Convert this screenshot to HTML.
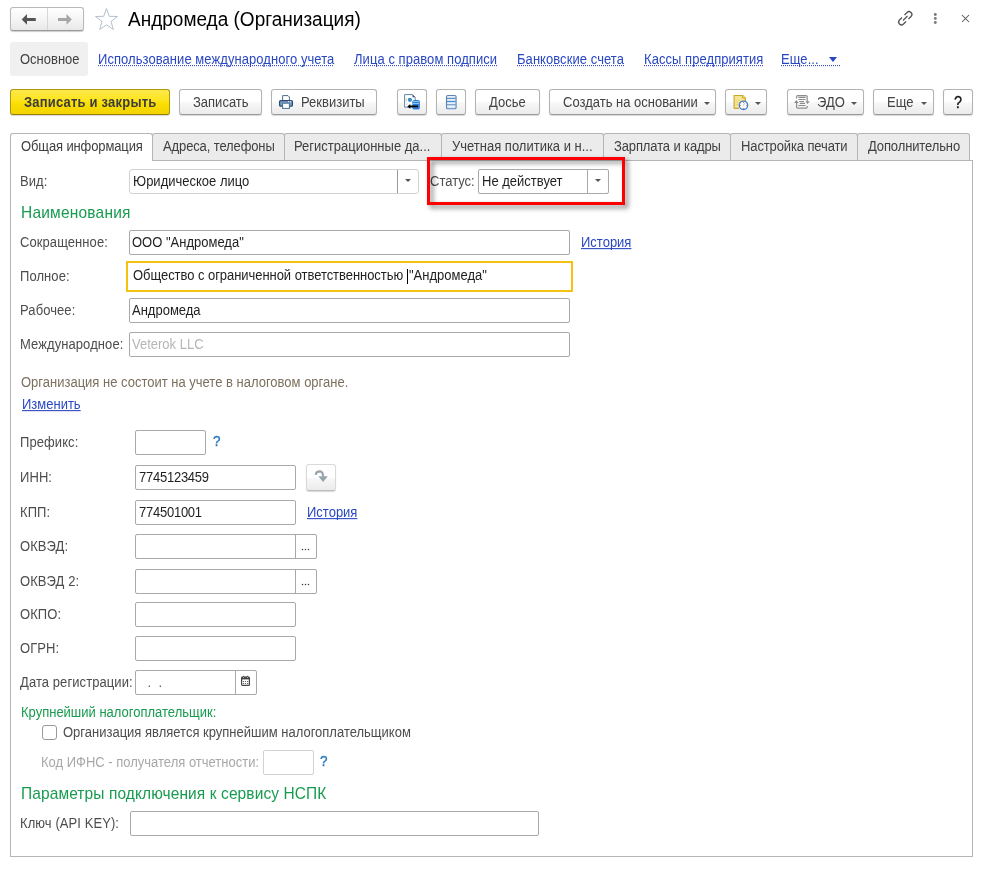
<!DOCTYPE html>
<html><head><meta charset="utf-8">
<style>
*{box-sizing:border-box;margin:0;padding:0}
html,body{width:992px;height:869px;background:#fff;overflow:hidden;position:relative;font-family:"Liberation Sans",sans-serif;font-size:13px;color:#4d4d4d}
.a{position:absolute}
.t{position:absolute;white-space:nowrap;line-height:13px;font-size:13px;transform:scaleY(1.08);transform-origin:0 11px}
.lnk{color:#2947c2;height:13px;letter-spacing:0.06px;background:repeating-linear-gradient(90deg,#2947c2 0 1px,transparent 1px 2px) left bottom/100% 1px no-repeat}
.ul{color:#2947c2;text-decoration:underline;text-decoration-skip-ink:none}
.btn{position:absolute;top:89px;height:26px;border:1px solid #b3b3b3;border-bottom-color:#9a9a9a;border-radius:3px;background:linear-gradient(#fff 0,#fff 50%,#f8f8f8 52%,#ebebeb 100%);box-shadow:0 1px 1px rgba(0,0,0,.16)}
.btn .t{color:#424242}
.fld{position:absolute;height:25px;border:1px solid #a9a9a9;border-radius:2px;background:#fff}
.fld .t{color:#1f1f1f}
.lab{position:absolute;white-space:nowrap;line-height:13px;font-size:13px;color:#4d4d4d;left:20px;letter-spacing:0.08px;transform:scaleY(1.08);transform-origin:0 11px}
.dd{position:absolute;top:0;bottom:0;border-left:1px solid #a9a9a9}
.tri{position:absolute;width:0;height:0;border-left:3px solid transparent;border-right:3px solid transparent;border-top:3px solid #555}
.tab{position:absolute;top:133px;height:27px;border:1px solid #b5b5b5;border-bottom:none;border-radius:3px 3px 0 0;background:#ebebeb}
.tab .t{color:#404040;top:6px;letter-spacing:-0.12px}
.grn{color:#179b4f}
</style></head><body>

<!-- title row -->
<div class="a" style="left:10px;top:7px;width:74px;height:24px;border:1px solid #b9b9b9;border-bottom-color:#9a9a9a;border-radius:3px;background:linear-gradient(#fff,#f3f3f3 60%,#e8e8e8);box-shadow:0 1px 1px rgba(0,0,0,.2)"></div>
<div class="a" style="left:47px;top:8px;width:1px;height:22px;background:#d6d6d6"></div>
<svg class="a" style="left:20px;top:13px" width="20" height="13" viewBox="0 0 20 13"><path d="M1.7 6.4 L7 1.1 L7 4.9 L15.8 4.9 L15.8 8.1 L7 8.1 L7 11.7 Z" fill="#555"/></svg>
<svg class="a" style="left:56px;top:13px" width="20" height="13" viewBox="0 0 20 13"><path d="M15.8 6.4 L10.5 1.1 L10.5 4.9 L2 4.9 L2 8.1 L10.5 8.1 L10.5 11.7 Z" fill="#a6a6a6"/></svg>
<svg class="a" style="left:94px;top:7px" width="25" height="24" viewBox="0 0 25 24"><path d="M12.5 1.5 L15.3 9.3 L23.5 9.5 L17 14.5 L19.3 22.5 L12.5 17.8 L5.7 22.5 L8 14.5 L1.5 9.5 L9.7 9.3 Z" fill="none" stroke="#b4c0cc" stroke-width="1"/></svg>
<div class="t" style="left:128px;top:10px;font-size:19px;line-height:19px;color:#000">Андромеда (Организация)</div>

<svg class="a" style="left:896px;top:9px" width="19" height="19" viewBox="0 0 19 19"><g fill="none" stroke="#555" stroke-width="1.3"><path d="M8.5 6 L11 3.5 Q13 1.6 15 3.5 Q17 5.5 15 7.5 L12.5 10"/><path d="M10 12.5 L7.5 15 Q5.5 17 3.5 15 Q1.6 13 3.5 11 L6 8.5"/><path d="M7 11.5 L11.5 7"/></g></svg>
<svg class="a" style="left:930px;top:10px" width="10" height="16" viewBox="0 0 10 16"><g fill="#7a7a7a"><circle cx="5.3" cy="4.5" r="1.45"/><circle cx="5.3" cy="8.4" r="1.45"/><circle cx="5.3" cy="12.5" r="1.45"/></g></svg>
<svg class="a" style="left:960px;top:13px" width="11" height="11" viewBox="0 0 11 11"><path d="M2 2 L9 9 M9 2 L2 9" stroke="#555" stroke-width="1.05"/></svg>

<!-- links row -->
<div class="a" style="left:10px;top:42px;width:78px;height:34px;border-radius:3px;background:#f0f0f0"></div>
<div class="t" style="left:20px;top:53px;color:#404040">Основное</div>
<div class="t lnk" style="left:98px;top:53px">Использование международного учета</div>
<div class="t lnk" style="left:354px;top:53px">Лица с правом подписи</div>
<div class="t lnk" style="left:517px;top:53px">Банковские счета</div>
<div class="t lnk" style="left:644px;top:53px">Кассы предприятия</div>
<div class="t lnk" style="left:781px;top:53px">Еще...&nbsp;&nbsp;&nbsp;&nbsp;&nbsp;&nbsp;</div>
<div class="tri" style="left:829px;top:57px;border-left-width:4px;border-right-width:4px;border-top:5px solid #2947c2"></div>

<!-- toolbar -->
<div class="btn" style="left:10px;width:160px;border-color:#ae9612;border-bottom-color:#977f00;background:linear-gradient(#ffe94a,#fde31a 45%,#fbdf00 55%,#f2d300)"><div class="t" style="left:13px;top:6px;font-weight:bold;color:#3d3d3d;letter-spacing:0.2px">Записать и закрыть</div></div>
<div class="btn" style="left:179px;width:83px"><div class="t" style="left:13px;top:6px">Записать</div></div>
<div class="btn" style="left:271px;width:106px"><div class="t" style="left:29px;top:6px">Реквизиты</div>
 <svg class="a" style="left:0;top:0" width="30" height="24" viewBox="0 0 30 24"><path d="M10.6 10.5 V5.6 H16 L17.4 7 V10.5" fill="#fff" stroke="#4f6f8c" stroke-width="1"/><rect x="7.6" y="10.6" width="12.8" height="5.6" rx="1.2" fill="#6fa9dc" stroke="#2f4a68" stroke-width="1.3"/><path d="M8.5 11.8 H19.5" stroke="#7f7fa8" stroke-width="0.8"/><circle cx="16.6" cy="11.6" r="0.6" fill="#fff"/><circle cx="18.6" cy="11.6" r="0.6" fill="#fff"/><rect x="10.6" y="13.2" width="6.8" height="5.2" fill="#fff" stroke="#4f6f8c" stroke-width="1"/></svg></div>
<div class="btn" style="left:397px;width:30px">
 <svg class="a" style="left:0;top:0" width="30" height="24" viewBox="0 0 30 24"><path d="M6.6 4.6 H14.5 L17.2 7.3 V17.2 H6.6 Z" fill="#fff" stroke="#6a86a0" stroke-width="1"/><path d="M14.5 4.6 V7.3 H17.2 Z" fill="#3a4f7a"/><circle cx="11.9" cy="9.8" r="2.1" fill="#2f86d6"/><path d="M10.6 9 Q11.5 8.6 12 9.8 Q12.5 11 13.4 10.4" stroke="#5cb85c" stroke-width="0.9" fill="none"/><path d="M8.2 8 V12 M8.2 14 H10" stroke="#bbb" stroke-width="0.7"/><rect x="14.3" y="9.9" width="7.6" height="9.6" rx="1.8" fill="#2f7fd4"/><path d="M15 11.5 H21.2 M15 13.5 H21.2" stroke="#8cc6f0" stroke-width="1"/><path d="M9.3 16.4 L12.3 14 V15.6 H20 V17.2 H12.3 V18.8 Z" fill="#000"/></svg></div>
<div class="btn" style="left:436px;width:30px">
 <svg class="a" style="left:0;top:0" width="30" height="24" viewBox="0 0 30 24"><rect x="9.5" y="5.5" width="9.6" height="13.3" rx="1.3" fill="#d7e8f8" stroke="#5f86b3" stroke-width="1.1"/><path d="M9.8 8.4 H18.8 M9.8 14.7 H18.8" stroke="#6a8fb8" stroke-width="1.1"/><path d="M9.8 11.5 H18.8" stroke="#4a8ed6" stroke-width="1.3"/><path d="M10.5 6.8 H18 M10.5 9.9 H18 M10.5 13.1 H18 M10.5 16.4 H18" stroke="#eef6fd" stroke-width="0.9"/></svg></div>
<div class="btn" style="left:475px;width:65px"><div class="t" style="left:13px;top:6px">Досье</div></div>
<div class="btn" style="left:549px;width:167px"><div class="t" style="left:13px;top:6px">Создать на основании</div><div class="tri" style="left:154px;top:12px"></div></div>
<div class="btn" style="left:725px;width:42px">
 <svg class="a" style="left:0;top:0" width="30" height="24" viewBox="0 0 30 24"><path d="M8.1 6 Q8.1 5.5 8.6 5.5 H16.6 L19.3 8.2 V13 M13 18.3 H8.6 Q8.1 18.3 8.1 17.8 Z" fill="#f6e394" stroke="#c6a92c" stroke-width="1.1"/><path d="M8.1 6 V17.8 H13 V13 H19.3 V8.2 L16.6 5.5 H8.6 Z" fill="#f6e394"/><path d="M8.1 6 Q8.1 5.5 8.6 5.5 H16.6 L19.3 8.2 V11 M13 18.3 H8.6 Q8.1 18.3 8.1 17.8 V6" fill="none" stroke="#c6a92c" stroke-width="1.1"/><path d="M16.4 5.5 V8 H19.3" fill="#f6e394" stroke="#c6a92c" stroke-width="1"/><path d="M9.8 10.4 H11 M12 10.4 H13.6 M9.8 12.4 H10.4 M11.2 12.4 H12.6 M9.8 14.4 H11.6" stroke="#e6cf70" stroke-width="0.9"/><circle cx="17.5" cy="15.3" r="4.2" fill="#fff" stroke="#3d7fd0" stroke-width="1.3"/><g fill="#e07a2e"><circle cx="17.5" cy="12.4" r="0.55"/><circle cx="17.5" cy="18.2" r="0.55"/><circle cx="14.6" cy="15.3" r="0.55"/><circle cx="20.4" cy="15.3" r="0.55"/></g><path d="M17.4 15.5 L18.6 13.2" stroke="#8ab8e8" stroke-width="0.9"/></svg>
 <div class="tri" style="left:29px;top:12px"></div></div>
<div class="btn" style="left:787px;width:77px">
 <svg class="a" style="left:0;top:0" width="30" height="24" viewBox="0 0 30 24"><g fill="none" stroke="#8c8c8c" stroke-width="1.2"><path d="M8.6 8.5 V6.8 Q8.6 5.6 9.8 5.6 H18 Q19.2 5.6 19.2 6.8 V11.5"/><path d="M8.6 12.8 V17 Q8.6 18.2 9.8 18.2 H18 Q19.2 18.2 19.2 17 V16"/><path d="M10.4 7.4 H17.6 M10.4 9.5 H17.6 M11.2 11.5 H16 M11.8 13.4 H17 M10.4 15.5 H17.6"/></g><path d="M8.4 10 L10.8 12.9 H6 Z M17.3 11.3 H21.8 L19.5 14 Z" fill="#8c8c8c"/></svg>
 <div class="t" style="left:29px;top:6px">ЭДО</div><div class="tri" style="left:63px;top:12px"></div></div>
<div class="btn" style="left:873px;width:61px"><div class="t" style="left:13px;top:6px">Еще</div><div class="tri" style="left:47px;top:12px"></div></div>
<div class="btn" style="left:943px;width:30px"><div class="t" style="left:10px;top:6px;color:#111;font-size:14.5px;line-height:15px;-webkit-text-stroke:0.25px #111">?</div></div>

<!-- tabs -->
<div class="a" style="left:10px;top:160px;width:963px;height:697px;border:1px solid #b5b5b5;background:#fff"></div>
<div class="tab" style="left:10px;width:143px;background:#fff;height:28px;z-index:1"><div class="t" style="left:10px">Общая информация</div></div>
<div class="tab" style="left:152px;width:133px"><div class="t" style="left:10px">Адреса, телефоны</div></div>
<div class="tab" style="left:284px;width:158px"><div class="t" style="left:9px;letter-spacing:0">Регистрационные да...</div></div>
<div class="tab" style="left:441px;width:163px"><div class="t" style="left:10px;letter-spacing:0">Учетная политика и н...</div></div>
<div class="tab" style="left:603px;width:128px"><div class="t" style="left:10px">Зарплата и кадры</div></div>
<div class="tab" style="left:730px;width:128px"><div class="t" style="left:10px">Настройка печати</div></div>
<div class="tab" style="left:857px;width:113px"><div class="t" style="left:10px">Дополнительно</div></div>

<!-- form -->
<div class="lab" style="top:175px">Вид:</div>
<div class="fld" style="left:129px;top:169px;width:290px;border-color:#d2d2d2;border-radius:3px"><div class="t" style="left:3px;top:5px">Юридическое лицо</div><div class="dd" style="left:267px;border-color:#9a9a9a"></div><div class="tri" style="left:275px;top:9px"></div></div>
<div class="t" style="left:430px;top:175px">Статус:</div>
<div class="fld" style="left:478px;top:169px;width:131px"><div class="t" style="left:3px;top:5px">Не действует</div><div class="dd" style="left:108px"></div><div class="tri" style="left:116px;top:9px"></div></div>

<div class="t grn" style="left:21px;top:205px;font-size:15.5px;line-height:15.5px;letter-spacing:0.2px">Наименования</div>

<div class="lab" style="top:236px">Сокращенное:</div>
<div class="fld" style="left:129px;top:230px;width:441px"><div class="t" style="left:2px;top:5px">ООО "Андромеда"</div></div>
<div class="t" style="left:581px;top:236px"><span class="ul">История</span></div>

<div class="lab" style="top:270px">Полное:</div>
<div class="a" style="left:126px;top:261px;width:447px;height:31px;border:2px solid #f5c211"></div>
<div class="t" style="left:133px;top:269px;color:#1f1f1f;letter-spacing:-0.05px">Общество с ограниченной ответственностью</div>
<div class="a" style="left:407px;top:269px;width:1px;height:15px;background:#000"></div>
<div class="t" style="left:409px;top:269px;color:#1f1f1f">"Андромеда"</div>

<div class="lab" style="top:304px">Рабочее:</div>
<div class="fld" style="left:129px;top:298px;width:441px"><div class="t" style="left:2px;top:5px">Андромеда</div></div>

<div class="lab" style="top:338px">Международное:</div>
<div class="fld" style="left:129px;top:332px;width:441px"><div class="t" style="left:2px;top:5px;color:#b5b5b5">Veterok LLC</div></div>

<div class="t" style="left:21px;top:376px;color:#7d6f5e">Организация не состоит на учете в налоговом органе.</div>
<div class="t" style="left:22px;top:398px"><span class="ul">Изменить</span></div>

<div class="lab" style="top:436px">Префикс:</div>
<div class="fld" style="left:135px;top:430px;width:71px"></div>
<div class="t" style="left:213px;top:435px;color:#2a78c0;font-size:13.5px;-webkit-text-stroke:0.35px #2a78c0">?</div>

<div class="lab" style="top:471px">ИНН:</div>
<div class="fld" style="left:135px;top:465px;width:161px"><div class="t" style="left:3px;top:5px;letter-spacing:-0.25px">7745123459</div></div>
<div class="btn" style="left:306px;top:464px;width:30px;height:27px;border-color:#d9d9d9;border-bottom-color:#bdbdbd">
 <svg class="a" style="left:0;top:0" width="30" height="26" viewBox="0 0 30 26"><path d="M8.7 9.9 Q9 6.4 13 6.4 Q16 6.6 16.1 11.5" fill="none" stroke="#97a3ab" stroke-width="2.1"/><path d="M11.4 11.3 H20.8 L16.1 17 Z" fill="#97a3ab"/></svg></div>

<div class="lab" style="top:506px">КПП:</div>
<div class="fld" style="left:135px;top:500px;width:161px"><div class="t" style="left:3px;top:5px;letter-spacing:-0.25px">774501001</div></div>
<div class="t" style="left:307px;top:506px"><span class="ul">История</span></div>

<div class="lab" style="top:540px">ОКВЭД:</div>
<div class="fld" style="left:135px;top:534px;width:182px"><div class="dd" style="left:159px"></div><svg class="a" style="left:164px;top:12px" width="12" height="5" viewBox="0 0 12 5"><g fill="#3a3a3a"><circle cx="2.5" cy="2.5" r="0.75"/><circle cx="5.5" cy="2.5" r="0.75"/><circle cx="8.5" cy="2.5" r="0.75"/></g></svg></div>

<div class="lab" style="top:575px">ОКВЭД 2:</div>
<div class="fld" style="left:135px;top:569px;width:182px"><div class="dd" style="left:159px"></div><svg class="a" style="left:164px;top:12px" width="12" height="5" viewBox="0 0 12 5"><g fill="#3a3a3a"><circle cx="2.5" cy="2.5" r="0.75"/><circle cx="5.5" cy="2.5" r="0.75"/><circle cx="8.5" cy="2.5" r="0.75"/></g></svg></div>

<div class="lab" style="top:608px">ОКПО:</div>
<div class="fld" style="left:135px;top:602px;width:161px"></div>

<div class="lab" style="top:642px">ОГРН:</div>
<div class="fld" style="left:135px;top:636px;width:161px"></div>

<div class="lab" style="top:676px">Дата регистрации:</div>
<div class="fld" style="left:135px;top:670px;width:122px"><div class="t" style="left:8px;top:5px;color:#555">&nbsp;.&nbsp;&nbsp;.</div><div class="dd" style="left:99px"></div>
 <svg class="a" style="left:105px;top:4px" width="9" height="11" viewBox="0 0 9 11"><rect x="0.6" y="2" width="7.8" height="8.4" rx="1" fill="#fff" stroke="#444" stroke-width="1.2"/><rect x="0.6" y="2" width="7.8" height="2.4" fill="#444"/><circle cx="2.5" cy="1.5" r="0.8" fill="#444"/><circle cx="6.5" cy="1.5" r="0.8" fill="#444"/><path d="M2.5 2.2 V3 M6.5 2.2 V3" stroke="#fff" stroke-width="0.8"/><g fill="#444"><circle cx="2.4" cy="6.5" r="0.6"/><circle cx="4.5" cy="6.5" r="0.6"/><circle cx="6.6" cy="6.5" r="0.6"/><circle cx="2.4" cy="8.5" r="0.6"/><circle cx="4.5" cy="8.5" r="0.6"/><circle cx="6.6" cy="8.5" r="0.6"/></g></svg></div>

<div class="t grn" style="left:21px;top:706px">Крупнейший налогоплательщик:</div>
<div class="a" style="left:42px;top:725px;width:15px;height:15px;border:1px solid #9a9a9a;border-radius:3px;background:#fff"></div>
<div class="t" style="left:63px;top:726px">Организация является крупнейшим налогоплательщиком</div>

<div class="t" style="left:41px;top:756px;color:#a8a8a8">Код ИФНС - получателя отчетности:</div>
<div class="fld" style="left:263px;top:750px;width:51px;border-color:#d2d2d2"></div>
<div class="t" style="left:320px;top:755px;color:#2a78c0;font-size:13.5px;-webkit-text-stroke:0.35px #2a78c0">?</div>

<div class="t grn" style="left:21px;top:786px;font-size:15.5px;line-height:15.5px;letter-spacing:0.1px">Параметры подключения к сервису НСПК</div>
<div class="lab" style="top:817px">Ключ (API KEY):</div>
<div class="fld" style="left:130px;top:811px;width:409px"></div>

<!-- red annotation -->
<div class="a" style="left:427px;top:157px;width:198px;height:48px;border:3px solid #ff0000;filter:drop-shadow(3.5px 3.5px 2.5px rgba(0,0,0,.5))"></div>

</body></html>
